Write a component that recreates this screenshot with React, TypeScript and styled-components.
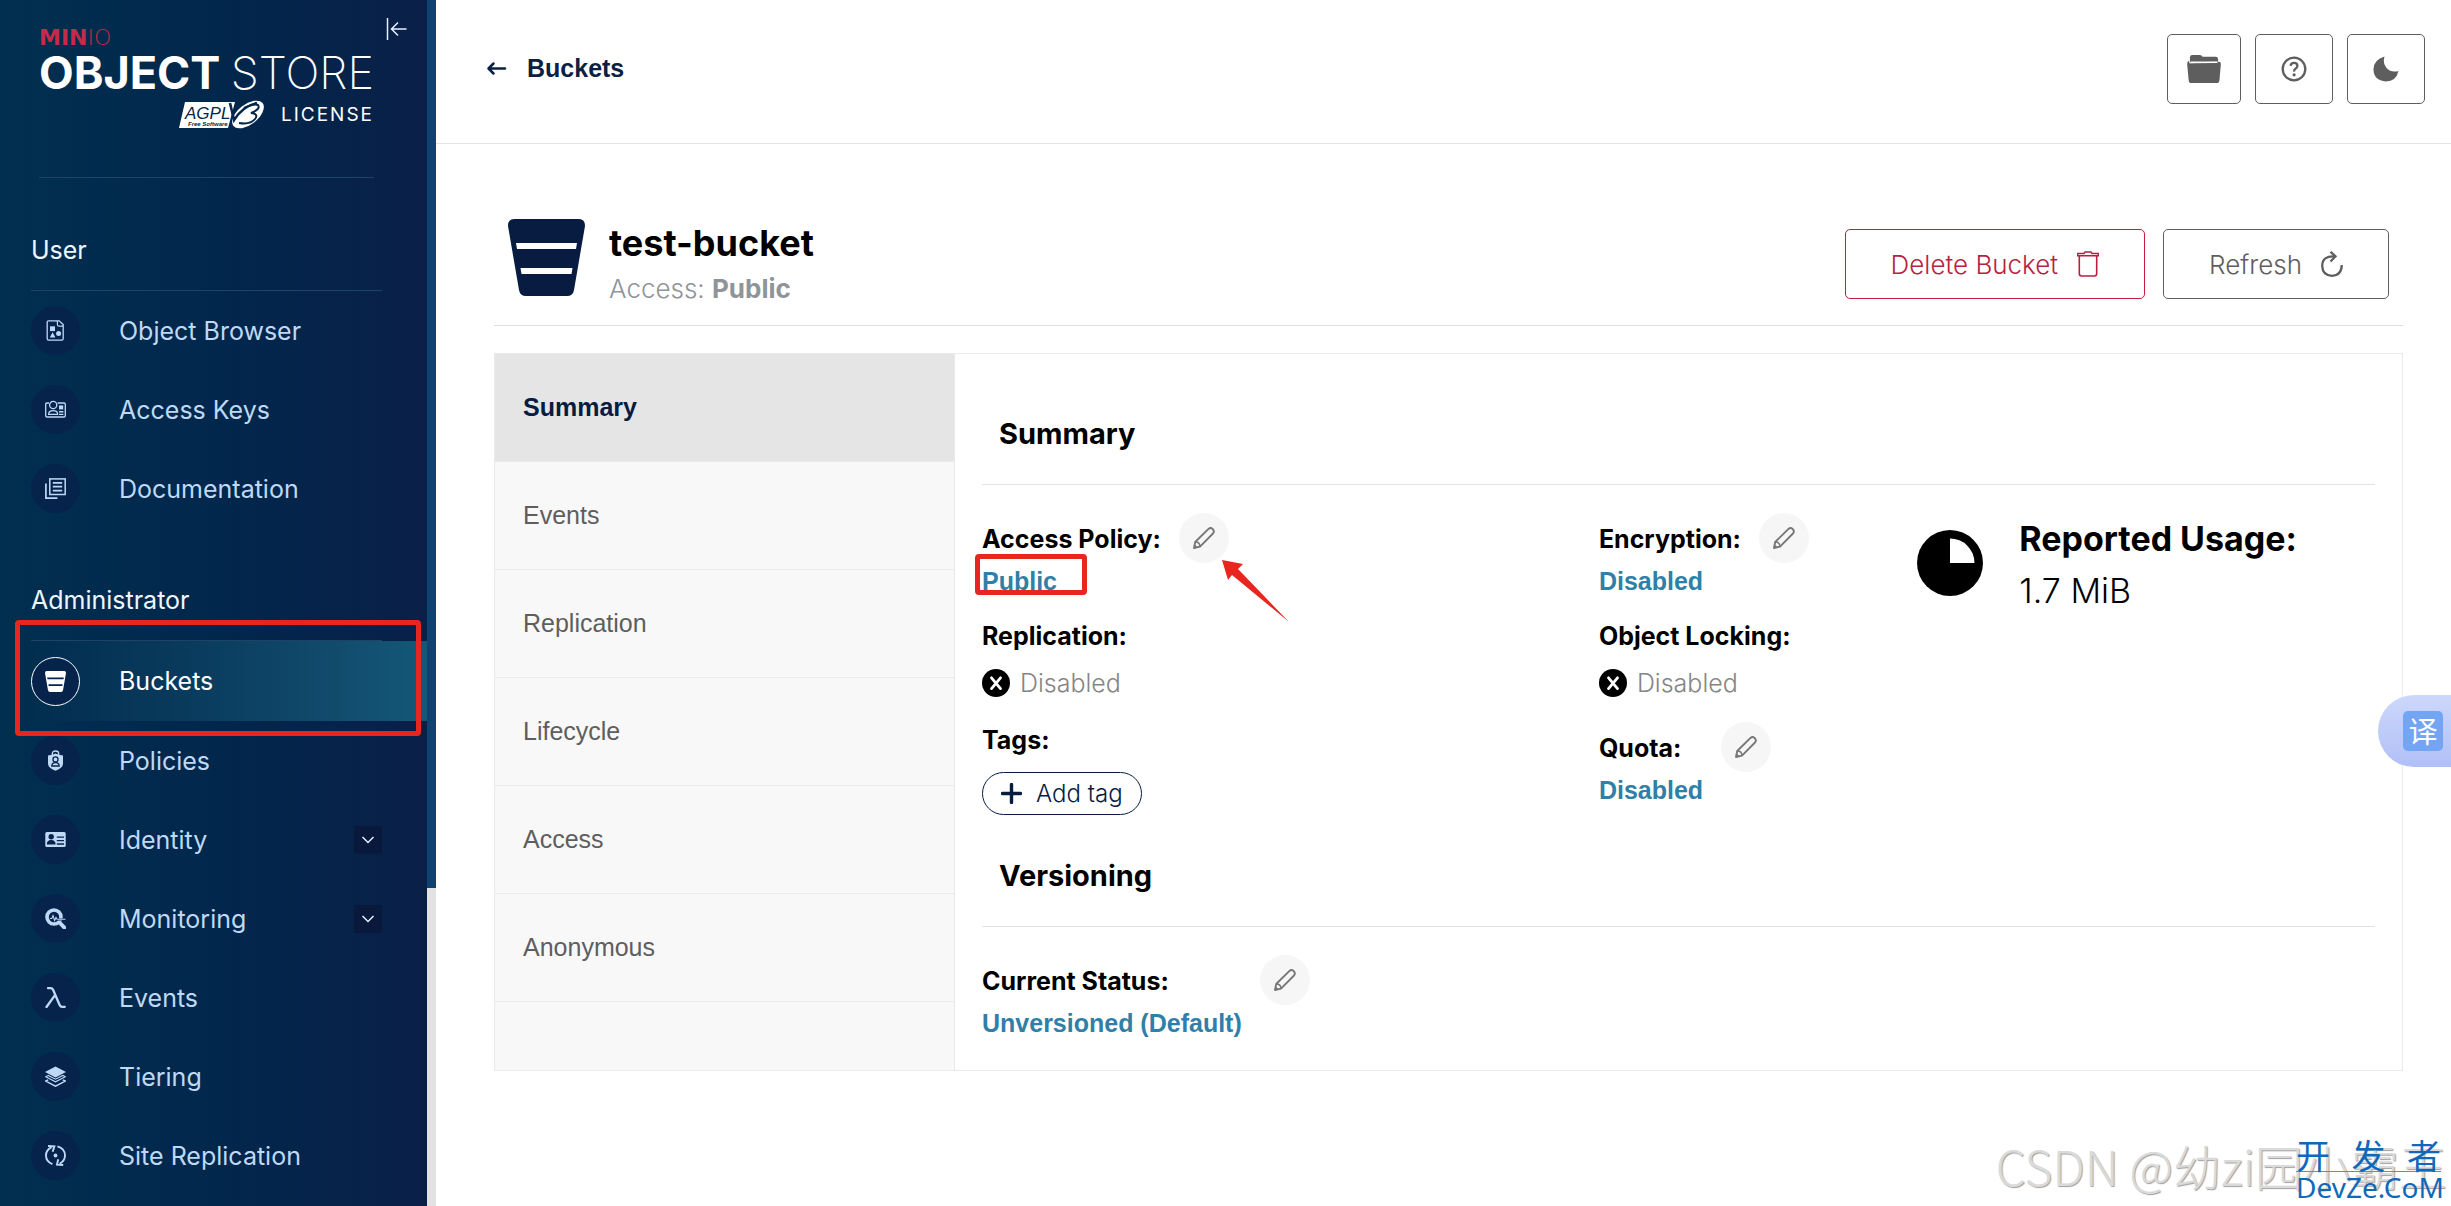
import React from "react";
import styled, { createGlobalStyle, css } from "styled-components";

const red = "#e8261f";
const controlFont = '"Liberation Sans", Arial, sans-serif';

const GlobalStyle = createGlobalStyle`
  *, *::before, *::after { box-sizing: border-box; }
  body { margin: 0; background: #fff; font-family: Inter, "Liberation Sans", sans-serif; color: #000; }
  button { font-family: inherit; cursor: pointer; }
  svg { display: block; flex-shrink: 0; }
  h1, h2, h3, dl, dd, ul { margin: 0; padding: 0; }
  a { text-decoration: none; color: inherit; }
`;

const Page = styled.div`
  position: relative;
  display: flex;
  height: 100vh;
  overflow: hidden;
`;

/* ---------- sidebar ---------- */

const Sidebar = styled.aside`
  display: flex;
  flex: 0 0 436px;
  background: linear-gradient(90deg, #012f4f 0%, #02274c 50%, #0a1f47 100%);
`;

const SidebarBody = styled.div`
  flex: 1;
  min-width: 0;
`;

const ScrollTrack = styled.div`
  width: 9px;
  background: #e2e2e2;
`;

const ScrollThumb = styled.div`
  height: 73.6%;
  background: #0f4270;
`;

const Brand = styled.div`
  position: relative;
  margin: 0 53px 0 39px;
  padding-top: 26px;
  height: 178px;
  border-bottom: 1px solid #1d4366;
  color: #fff;
`;

const BrandName = styled.div`
  font-family: "DejaVu Sans", sans-serif;
  font-size: 22px;
  line-height: 24px;
  font-weight: 700;
  color: #c62a4b;
  span { font-weight: 200; }
`;

const BrandProduct = styled.div`
  display: flex;
  justify-content: space-between;
  font-size: 45px;
  line-height: 46px;
  font-weight: 700;
  span { font-weight: 200; }
`;

const BrandLicense = styled.div`
  display: flex;
  justify-content: flex-end;
  align-items: center;
  gap: 16px;
  padding-top: 4px;
  font-size: 19px;
  line-height: 28px;
  letter-spacing: 2px;
`;

const CollapseButton = styled.button`
  position: absolute;
  top: 18px;
  right: -34px;
  padding: 0;
  border: 0;
  background: none;
  color: #e6f1ff;
`;

const SectionTitle = styled.h2`
  margin: 0 45px 0 31px;
  padding: 57px 0 25px;
  border-bottom: 1px solid #1d4366;
  font-size: 25px;
  line-height: 30px;
  font-weight: 400;
  color: #eef6ff;
`;

const MenuList = styled.ul`
  list-style: none;
`;

const MenuItem = styled.li<{ $active?: boolean }>`
  position: relative;
  margin-left: 31px;
  ${(p) =>
    p.$active &&
    css`
      background: linear-gradient(90deg, rgba(20, 92, 124, 0) 0%, #145878 100%);
    `}
`;

const MenuLink = styled.a<{ $active?: boolean }>`
  display: flex;
  align-items: center;
  height: ${(p) => (p.$active ? "80px" : "79px")};
  padding-right: 45px;
  gap: 39px;
  font-size: 25px;
  color: ${(p) => (p.$active ? "#fff" : "#bfd9f5")};
`;

const MenuIcon = styled.span<{ $active?: boolean }>`
  display: flex;
  align-items: center;
  justify-content: center;
  width: 49px;
  height: 49px;
  border-radius: 50%;
  background: #06234c;
  border: 1px solid ${(p) => (p.$active ? "#fff" : "#06234c")};
`;

const Expander = styled.span`
  display: flex;
  align-items: center;
  justify-content: center;
  width: 28px;
  height: 28px;
  margin-left: auto;
  border-radius: 3px;
  background: #08193c;
  color: #e6f1ff;
`;

const MenuMark = styled.span`
  position: absolute;
  left: -16px;
  right: 6px;
  top: -21px;
  bottom: -15px;
  border: 5px solid ${red};
  border-radius: 4px;
  pointer-events: none;
`;

/* ---------- main ---------- */

const Main = styled.main`
  flex: 1;
  min-width: 0;
`;

const TopBar = styled.header`
  display: flex;
  align-items: center;
  justify-content: space-between;
  height: 144px;
  padding: 0 26px 6px 50px;
  border-bottom: 1px solid #e2e2e2;
`;

const BackLink = styled.a`
  display: flex;
  align-items: center;
  gap: 20px;
  font-family: ${controlFont};
  font-size: 25px;
  font-weight: 700;
  color: #0a2142;
`;

const TopActions = styled.div`
  display: flex;
  gap: 14px;
`;

const OutlineButton = styled.button<{ $danger?: boolean; $wide?: boolean }>`
  display: flex;
  align-items: center;
  justify-content: center;
  gap: 19px;
  height: 70px;
  padding: 0 ${(p) => (p.$wide ? "45px" : "25px")};
  border: 1px solid ${(p) => (p.$danger ? "#c51b3f" : "#5e5e5e")};
  border-radius: 5px;
  background: #fff;
  font-size: 26px;
  font-weight: 300;
  color: ${(p) => (p.$danger ? "#b91f40" : "#5e5e5e")};
`;

const FolderButton = styled(OutlineButton)`
  padding: 0 19px;
`;

const Content = styled.div`
  padding: 75px 48px 0 58px;
`;

const BucketHeader = styled.div`
  display: flex;
  align-items: flex-start;
  gap: 24px;
  padding: 0 14px 14px;
  border-bottom: 1px solid #dedede;
`;

const BigBucket = styled.div`
  color: #081c42;
`;

const BucketHeading = styled.div`
  flex: 1;
`;

const BucketTitle = styled.h1`
  font-size: 36px;
  line-height: 48px;
  font-weight: 700;
`;

const BucketAccess = styled.div`
  font-size: 26px;
  line-height: 44px;
  font-weight: 300;
  color: #8f9499;
  strong { font-weight: 700; }
`;

const BucketActions = styled.div`
  display: flex;
  gap: 18px;
  padding-top: 10px;
`;

const Card = styled.section`
  display: flex;
  margin-top: 27px;
  border: 1px solid #eaeaea;
`;

const Tabs = styled.nav`
  display: flex;
  flex-direction: column;
  flex: 0 0 460px;
  border-right: 1px solid #eaeaea;
  background: #f8f8f8;
`;

const Tab = styled.button<{ $active?: boolean }>`
  height: 108px;
  padding: 0 28px;
  border: 0;
  border-bottom: 1px solid #eaeaea;
  background: ${(p) => (p.$active ? "#e5e5e5" : "transparent")};
  text-align: left;
  font-family: ${controlFont};
  font-size: 25px;
  font-weight: ${(p) => (p.$active ? 700 : 400)};
  color: ${(p) => (p.$active ? "#081c42" : "#5e5e5e")};
`;

const Panel = styled.div`
  flex: 1;
  min-width: 0;
  padding: 60px 27px 26px;
`;

const PanelTitle = styled.h3<{ $spaced?: boolean }>`
  margin-top: ${(p) => (p.$spaced ? "41px" : "0")};
  margin-bottom: 28px;
  padding: 0 17px 30px;
  border-bottom: 1px solid #e2e2e2;
  font-size: 29px;
  line-height: 40px;
  font-weight: 700;
`;

const Facts = styled.div`
  display: grid;
  grid-template-columns: 31fr 16fr 23fr;
`;

const FactColumn = styled.div`
  display: flex;
  flex-direction: column;
  align-items: flex-start;
  gap: 13px;
`;

const EditableRow = styled.div`
  display: flex;
  align-items: flex-start;
  gap: 18px;
`;

const EditableText = styled.div`
  padding-top: 5px;
`;

const Label = styled.div`
  font-size: 25px;
  line-height: 42px;
  font-weight: 700;
`;

const ValueLink = styled.a`
  display: block;
  position: relative;
  width: fit-content;
  font-family: ${controlFont};
  font-size: 25px;
  line-height: 42px;
  font-weight: 700;
  color: #2f7fa8;
`;

const ValueMark = styled.span`
  position: absolute;
  left: -7px;
  right: -30px;
  top: -6px;
  height: 41px;
  border: 5px solid ${red};
  border-radius: 4px;
  pointer-events: none;
`;

const EditButton = styled.button`
  position: relative;
  display: flex;
  align-items: center;
  justify-content: center;
  width: 50px;
  height: 50px;
  padding: 0;
  border: 0;
  border-radius: 50%;
  background: #f6f6f6;
  color: #777;
`;

const Pointer = styled.span`
  position: absolute;
  left: 43px;
  top: 47px;
  pointer-events: none;
`;

const Status = styled.div`
  display: flex;
  align-items: center;
  gap: 10px;
  height: 52px;
  font-size: 25px;
  font-weight: 300;
  color: #858585;
`;

const Tags = styled.div`
  display: flex;
  flex-direction: column;
  align-items: flex-start;
  gap: 14px;
`;

const TagsLabel = styled(Label)`
  line-height: 36px;
`;

const AddTag = styled.button`
  display: flex;
  align-items: center;
  gap: 14px;
  height: 43px;
  padding: 0 18px;
  border: 1px solid #081c42;
  border-radius: 22px;
  background: #fff;
  font-size: 24px;
  font-weight: 300;
  color: #081c42;
`;

const Usage = styled.div`
  display: flex;
  align-items: flex-start;
  gap: 36px;
  svg { margin-top: 17px; }
`;

const UsageLabel = styled.div`
  font-size: 34px;
  line-height: 52px;
  font-weight: 700;
`;

const UsageValue = styled.div`
  font-size: 34px;
  line-height: 52px;
  font-weight: 300;
`;

/* ---------- floating parts ---------- */

const TranslateTab = styled.button`
  position: absolute;
  right: 0;
  top: 695px;
  display: flex;
  align-items: center;
  width: 73px;
  height: 72px;
  padding: 0 8px 0 25px;
  border: 0;
  border-radius: 36px 0 0 36px;
  background: linear-gradient(180deg, #ced8fb 0%, #b0bff7 100%);
`;

const TranslateGlyph = styled.span`
  width: 40px;
  height: 40px;
  border-radius: 5px;
  background: #74a5f5;
  font-family: "Noto Sans CJK SC", sans-serif;
  font-size: 29px;
  line-height: 38px;
  text-align: center;
  color: #fff;
`;

const Watermark = styled.div`
  position: absolute;
  right: 4px;
  bottom: 8px;
  font-family: "Noto Sans CJK SC", sans-serif;
  font-size: 48px;
  font-weight: 300;
  line-height: 66px;
  white-space: nowrap;
  color: #dadada;
  text-shadow: 1px 1px 1px #a0a0a0;
`;

const SiteStamp = styled.div`
  position: absolute;
  right: 10px;
  bottom: 4px;
  width: 145px;
  color: #1268b8;
`;

const StampTop = styled.div`
  display: flex;
  justify-content: space-between;
  border-bottom: 1px solid #4a94d8;
  font-family: "Noto Sans CJK SC", sans-serif;
  font-size: 34px;
  line-height: 32px;
`;

const StampBottom = styled.div`
  font-family: "Noto Sans", sans-serif;
  font-size: 28px;
  line-height: 30px;
  white-space: nowrap;
`;

/* ---------- icons ---------- */

const Svg = ({ size = 21, children, box = 21 }: { size?: number; box?: number; children: React.ReactNode }) => (
  <svg width={size} height={size} viewBox={`0 0 ${box} ${box}`} fill="none" aria-hidden="true">
    {children}
  </svg>
);

const BrowserIcon = () => (
  <Svg>
    <path d="M3.6 0.8H14.2L18.2 4.6V18.8Q18.2 20.2 16.8 20.2H3.6Q2.2 20.2 2.2 18.8V2.2Q2.2 0.8 3.6 0.8Z" stroke="currentColor" strokeWidth="1.3" />
    <path d="M12.4 1V4.4Q12.4 6.2 14.2 6.2H18" stroke="currentColor" strokeWidth="1.2" />
    <rect x="5" y="6.3" width="5" height="4.8" fill="currentColor" />
    <path d="M7.6 12.2L10.4 17.4H4.8Z" fill="currentColor" />
    <circle cx="13.6" cy="13.6" r="2.5" fill="currentColor" />
  </Svg>
);

const KeysIcon = () => (
  <Svg>
    <path d="M4 4H2Q0.7 4 0.7 5.3V16.8Q0.7 18 2 18H19Q20.3 18 20.3 16.8V5.3Q20.3 4 19 4H12.5" stroke="currentColor" strokeWidth="1.3" />
    <circle cx="8.2" cy="6" r="3.6" stroke="currentColor" strokeWidth="1.3" />
    <path d="M3.6 15.4Q3.6 11.6 8.2 11.6T12.6 15.4Z" stroke="currentColor" strokeWidth="1.3" />
    <rect x="14" y="6.4" width="4.2" height="4" fill="currentColor" />
    <path d="M14 12.8H18.4M14 15.4H18.4" stroke="currentColor" strokeWidth="1.4" />
  </Svg>
);

const DocsIcon = () => (
  <Svg>
    <rect x="4.8" y="0.9" width="15.4" height="15.6" stroke="currentColor" strokeWidth="1.5" />
    <path d="M0.9 5.6V20.2H12.4" stroke="currentColor" strokeWidth="1.7" />
    <path d="M7.8 4.8H17.2M7.8 8.7H17.2M7.8 12.6H17.2" stroke="currentColor" strokeWidth="1.7" />
  </Svg>
);

const BucketIcon = ({ size = 21, gap = "#06234c" }: { size?: number; gap?: string }) => (
  <Svg size={size} box={77}>
    <path d="M6 0H71Q77 0 77 7L66 71Q65 77 59 77H18Q12 77 11 71L0 7Q0 0 6 0Z" fill="currentColor" />
    <path d="M8 24H69L68 30H9ZM12.500 49H64.500L63.500 55H13.500Z" fill={gap} />
  </Svg>
);

const PolicyIcon = () => (
  <Svg>
    <path d="M7.300 5V3.600Q7.300 1 10.500 1T13.700 3.600V5" stroke="currentColor" strokeWidth="1.300" />
    <path d="M3 5.400Q7.500 5 10.500 3.400Q13.500 5 18 5.400V13.500Q18 18 10.500 20.800Q3 18 3 13.500Z" fill="currentColor" />
    <circle cx="10.500" cy="9.400" r="2.500" stroke="#06234c" strokeWidth="1.300" />
    <path d="M6.800 16Q6.800 12.600 10.500 12.600T14.200 16Z" stroke="#06234c" strokeWidth="1.300" />
  </Svg>
);

const IdentityIcon = () => (
  <Svg>
    <rect x="0.300" y="3" width="20.400" height="15" rx="1.500" fill="currentColor" />
    <circle cx="6.200" cy="7.800" r="2.700" fill="#06234c" />
    <path d="M1.800 15.600Q1.800 11 6.200 11T10.600 15.600Z" fill="#06234c" />
    <path d="M11.800 8.200H19M11.800 11.600H19M11.800 15H19" stroke="#06234c" strokeWidth="1.300" />
  </Svg>
);

const MonitorIcon = () => (
  <Svg>
    <circle cx="9" cy="9" r="7" stroke="currentColor" strokeWidth="3.600" />
    <path d="M14 14L19.400 19.600" stroke="currentColor" strokeWidth="3.800" strokeLinecap="round" />
    <path d="M10.500 11.500H21" stroke="#06234c" strokeWidth="2" />
    <path d="M5 10.500H6.800L8 7.500L9.600 12.500L11 9.500L12 11.200H20.500" stroke="currentColor" strokeWidth="1.100" />
  </Svg>
);

const LambdaIcon = () => (
  <Svg>
    <path d="M3 1.200H5.600Q7.400 1.200 8.200 3L14.600 18Q15.400 19.800 17.200 19.800H19.800" stroke="currentColor" strokeWidth="2.300" strokeLinecap="round" />
    <path d="M9.800 8.400L1.500 20" stroke="currentColor" strokeWidth="2.300" strokeLinecap="round" />
  </Svg>
);

const TierIcon = () => (
  <Svg>
    <path d="M10.500 0.500L21 6L10.500 11.500L0 6Z" fill="currentColor" />
    <path d="M3.200 9.400L0.700 10.700L10.500 15.800L20.300 10.700L17.800 9.400L10.500 13.200Z" stroke="currentColor" strokeWidth="1.100" />
    <path d="M3.200 13.800L0.700 15.100L10.500 20.200L20.300 15.100L17.800 13.800" stroke="currentColor" strokeWidth="1.500" />
  </Svg>
);

const SiteIcon = () => (
  <Svg>
    <path d="M7.400 19.200Q1 16.500 1 10.500Q1 5 6.600 2.200" stroke="currentColor" strokeWidth="1.900" />
    <path d="M3 1L9.400 1.400L7.600 6.800" stroke="currentColor" strokeWidth="1.900" />
    <path d="M12.400 1.400Q20 3.600 20 10.500Q20 15.600 14.600 18.800" stroke="currentColor" strokeWidth="1.900" />
    <path d="M18.200 20L12 19.600L13.200 14.200" stroke="currentColor" strokeWidth="1.900" />
    <circle cx="10.500" cy="10.500" r="1.900" fill="currentColor" />
  </Svg>
);

const ChevronIcon = () => (
  <Svg size={14} box={14}>
    <path d="M1.500 4L7 9.500L12.500 4" stroke="currentColor" strokeWidth="1.500" />
  </Svg>
);

const CollapseIcon = () => (
  <Svg size={22} box={22}>
    <path d="M1.500 0V22M20.500 11H6M12 4.500L5.500 11L12 17.500" stroke="currentColor" strokeWidth="1.500" />
  </Svg>
);

const BackIcon = () => (
  <Svg size={21} box={21}>
    <path d="M19 10.500H3M7.500 5.500L2.500 10.500L7.500 15.500" stroke="currentColor" strokeWidth="2.500" strokeLinecap="round" strokeLinejoin="round" />
  </Svg>
);

const FolderIcon = () => (
  <svg width="34" height="30" viewBox="0 0 35 30" fill="currentColor" aria-hidden="true">
    <path d="M3 8V3Q3 0.500 5.500 0.500H13Q15.500 0.500 16 2.500H29.500Q32 2.500 32 5V8L31 7.200H4Z" />
    <path d="M2.600 9.200L29 8L34 7.500Q35 8.500 34.800 10.500L33.400 26.500Q33 29.500 30.500 29.500H4.500Q2 29.500 1.700 26.500L0.200 10Q0 7.500 2 6.500Z" />
    <path d="M3.500 8.600L31.500 8.100" stroke="#fff" strokeWidth="1.200" />
  </svg>
);

const HelpIcon = () => (
  <Svg size={26} box={26}>
    <circle cx="13" cy="13" r="11.300" stroke="currentColor" strokeWidth="2.300" />
    <path d="M9.600 9.800Q9.900 6.800 13.100 6.800T16.400 9.900Q16.400 11.600 14.700 12.600T13.100 15.600" stroke="currentColor" strokeWidth="2.300" />
    <circle cx="13.100" cy="18.800" r="1.600" fill="currentColor" />
  </Svg>
);

const MoonIcon = () => (
  <Svg size={26} box={26}>
    <path d="M11.500 0.500Q9.500 7 13.500 12Q18 17 25.500 15Q23 25.500 13 25.500Q0.500 24.500 0.500 13Q1 3.500 11.500 0.500Z" fill="currentColor" />
  </Svg>
);

const TrashIcon = () => (
  <svg width="22" height="26" viewBox="0 0 22 26" fill="none" stroke="currentColor" strokeWidth="1.600" aria-hidden="true">
    <path d="M0.500 4.800V2.500H7L8 1H14L15 2.500H21.500V4.800Z" />
    <path d="M2.300 5V22.500Q2.300 25 4.600 25H17.400Q19.700 25 19.700 22.500V5" />
  </svg>
);

const RefreshIcon = () => (
  <svg width="22" height="26" viewBox="0 0 22 26" fill="none" stroke="currentColor" strokeWidth="2.300" aria-hidden="true">
    <path d="M14 5.500Q1.200 4.500 1.200 15Q1.600 24.500 11 24.800Q20.500 24.300 20.800 14" />
    <path d="M9.500 0.800L14.500 5.300L9.500 10.500" />
  </svg>
);

const PencilIcon = () => (
  <Svg size={22} box={22}>
    <path d="M1 21L2.200 15L15.500 1.900Q17.600 0.200 19.800 2.100Q21.800 4.400 20 6.500L7 19.600Z" stroke="currentColor" strokeWidth="1.900" strokeLinejoin="round" />
    <path d="M2.400 14.800Q6.800 15.200 7 19.500" stroke="currentColor" strokeWidth="1.500" />
    <path d="M1 21L1.700 17.500L4.500 20.300Z" fill="currentColor" />
  </Svg>
);

const DisabledIcon = () => (
  <Svg size={28} box={28}>
    <circle cx="14" cy="14" r="14" fill="#000" />
    <path d="M9.500 8.800L18.500 19.600M18.500 8.800L9.500 19.600" stroke="#fff" strokeWidth="2.800" strokeLinecap="round" />
  </Svg>
);

const PlusIcon = () => (
  <Svg size={21} box={21}>
    <path d="M10.500 1.500V19.500M1.500 10.500H19.500" stroke="currentColor" strokeWidth="3.400" strokeLinecap="round" />
  </Svg>
);

const UsageIcon = () => (
  <Svg size={66} box={66}>
    <circle cx="33" cy="33" r="33" fill="#000" />
    <path d="M33 8.500A24.500 24.500 0 0 1 57.500 33H33Z" fill="#fff" />
  </Svg>
);

const ArrowMark = () => (
  <svg width="67" height="63" viewBox="0 0 67 63" fill={red} aria-hidden="true">
    <path d="M0 0L21 4L16 9L67 62L10 15L6 20Z" />
  </svg>
);

const AgplBadge = () => (
  <svg width="86" height="29" viewBox="0 0 86 29" role="img" aria-label="AGPL v3 Free Software">
    <path d="M6 2H56L49 28H0Z" fill="#fff" />
    <g letterSpacing="0">
      <text x="6" y="19" fontFamily="Liberation Sans Narrow, Liberation Sans" fontSize="17" fontStyle="italic" fill="#02274c">AGPL</text>
      <text x="9" y="26" fontFamily="Liberation Sans" fontSize="6" fontWeight="700" fontStyle="italic" fill="#02274c">Free Software</text>
    </g>
    <ellipse cx="69" cy="14.500" rx="18.500" ry="10" transform="rotate(-38 69 14.500)" fill="#fff" />
    <path d="M51 3L55 20Q64 6 78 3" fill="none" stroke="#02274c" strokeWidth="2.600" />
    <path d="M65 8Q75 3 79 5Q82 9 72 13Q80 14 76 19Q71 25 60 23" fill="none" stroke="#02274c" strokeWidth="2" />
  </svg>
);

/* ---------- data ---------- */

type Entry = { label: string; icon: React.ReactNode; active?: boolean; nested?: boolean };

const userMenu: Entry[] = [
  { label: "Object Browser", icon: <BrowserIcon /> },
  { label: "Access Keys", icon: <KeysIcon /> },
  { label: "Documentation", icon: <DocsIcon /> },
];

const adminMenu: Entry[] = [
  { label: "Buckets", icon: <BucketIcon />, active: true },
  { label: "Policies", icon: <PolicyIcon /> },
  { label: "Identity", icon: <IdentityIcon />, nested: true },
  { label: "Monitoring", icon: <MonitorIcon />, nested: true },
  { label: "Events", icon: <LambdaIcon /> },
  { label: "Tiering", icon: <TierIcon /> },
  { label: "Site Replication", icon: <SiteIcon /> },
];

const tabs = ["Summary", "Events", "Replication", "Lifecycle", "Access", "Anonymous"];

const Menu = ({ entries }: { entries: Entry[] }) => (
  <MenuList>
    {entries.map((e) => (
      <MenuItem key={e.label} $active={e.active}>
        <MenuLink href="#" $active={e.active}>
          <MenuIcon $active={e.active}>{e.icon}</MenuIcon>
          {e.label}
          {e.nested && (
            <Expander>
              <ChevronIcon />
            </Expander>
          )}
        </MenuLink>
        {e.active && <MenuMark />}
      </MenuItem>
    ))}
  </MenuList>
);

const Editable = ({ label, value, marked }: { label: string; value: string; marked?: boolean }) => (
  <EditableRow>
    <EditableText>
      <Label>{label}</Label>
      <ValueLink href="#">
        {value}
        {marked && <ValueMark />}
      </ValueLink>
    </EditableText>
    <EditButton aria-label={`Edit ${label}`}>
      <PencilIcon />
      {marked && (
        <Pointer>
          <ArrowMark />
        </Pointer>
      )}
    </EditButton>
  </EditableRow>
);

const DisabledFact = ({ label }: { label: string }) => (
  <div>
    <Label>{label}</Label>
    <Status>
      <DisabledIcon />
      Disabled
    </Status>
  </div>
);

export default function App() {
  return (
    <Page>
      <GlobalStyle />
      <Sidebar>
        <SidebarBody>
          <Brand>
            <BrandName>
              MIN<span>IO</span>
            </BrandName>
            <BrandProduct>
              OBJECT <span>STORE</span>
            </BrandProduct>
            <BrandLicense>
              <AgplBadge />
              LICENSE
            </BrandLicense>
            <CollapseButton aria-label="Collapse menu">
              <CollapseIcon />
            </CollapseButton>
          </Brand>
          <SectionTitle>User</SectionTitle>
          <Menu entries={userMenu} />
          <SectionTitle>Administrator</SectionTitle>
          <Menu entries={adminMenu} />
        </SidebarBody>
        <ScrollTrack aria-hidden="true">
          <ScrollThumb />
        </ScrollTrack>
      </Sidebar>

      <Main>
        <TopBar>
          <BackLink href="#">
            <BackIcon />
            Buckets
          </BackLink>
          <TopActions>
            <FolderButton aria-label="Object manager">
              <FolderIcon />
            </FolderButton>
            <OutlineButton aria-label="Help">
              <HelpIcon />
            </OutlineButton>
            <OutlineButton aria-label="Dark mode">
              <MoonIcon />
            </OutlineButton>
          </TopActions>
        </TopBar>

        <Content>
          <BucketHeader>
            <BigBucket>
              <BucketIcon size={77} gap="#fff" />
            </BigBucket>
            <BucketHeading>
              <BucketTitle>test-bucket</BucketTitle>
              <BucketAccess>
                Access: <strong>Public</strong>
              </BucketAccess>
            </BucketHeading>
            <BucketActions>
              <OutlineButton $danger $wide>
                Delete Bucket
                <TrashIcon />
              </OutlineButton>
              <OutlineButton $wide>
                Refresh
                <RefreshIcon />
              </OutlineButton>
            </BucketActions>
          </BucketHeader>

          <Card>
            <Tabs>
              {tabs.map((t, i) => (
                <Tab key={t} $active={i === 0}>
                  {t}
                </Tab>
              ))}
            </Tabs>
            <Panel>
              <PanelTitle>Summary</PanelTitle>
              <Facts>
                <FactColumn>
                  <Editable label="Access Policy:" value="Public" marked />
                  <DisabledFact label="Replication:" />
                  <Tags>
                    <TagsLabel>Tags:</TagsLabel>
                    <AddTag>
                      <PlusIcon />
                      Add tag
                    </AddTag>
                  </Tags>
                </FactColumn>
                <FactColumn>
                  <Editable label="Encryption:" value="Disabled" />
                  <DisabledFact label="Object Locking:" />
                  <Editable label="Quota:" value="Disabled" />
                </FactColumn>
                <Usage>
                  <UsageIcon />
                  <div>
                    <UsageLabel>Reported Usage:</UsageLabel>
                    <UsageValue>1.7 MiB</UsageValue>
                  </div>
                </Usage>
              </Facts>
              <PanelTitle $spaced>Versioning</PanelTitle>
              <Editable label="Current Status:" value="Unversioned (Default)" />
            </Panel>
          </Card>
        </Content>
      </Main>

      <TranslateTab aria-label="Translate">
        <TranslateGlyph>译</TranslateGlyph>
      </TranslateTab>
      <Watermark>CSDN @幼zi园小霸王</Watermark>
      <SiteStamp>
        <StampTop>
          <span>开</span>
          <span>发</span>
          <span>者</span>
        </StampTop>
        <StampBottom>DevZe.CoM</StampBottom>
      </SiteStamp>
    </Page>
  );
}
